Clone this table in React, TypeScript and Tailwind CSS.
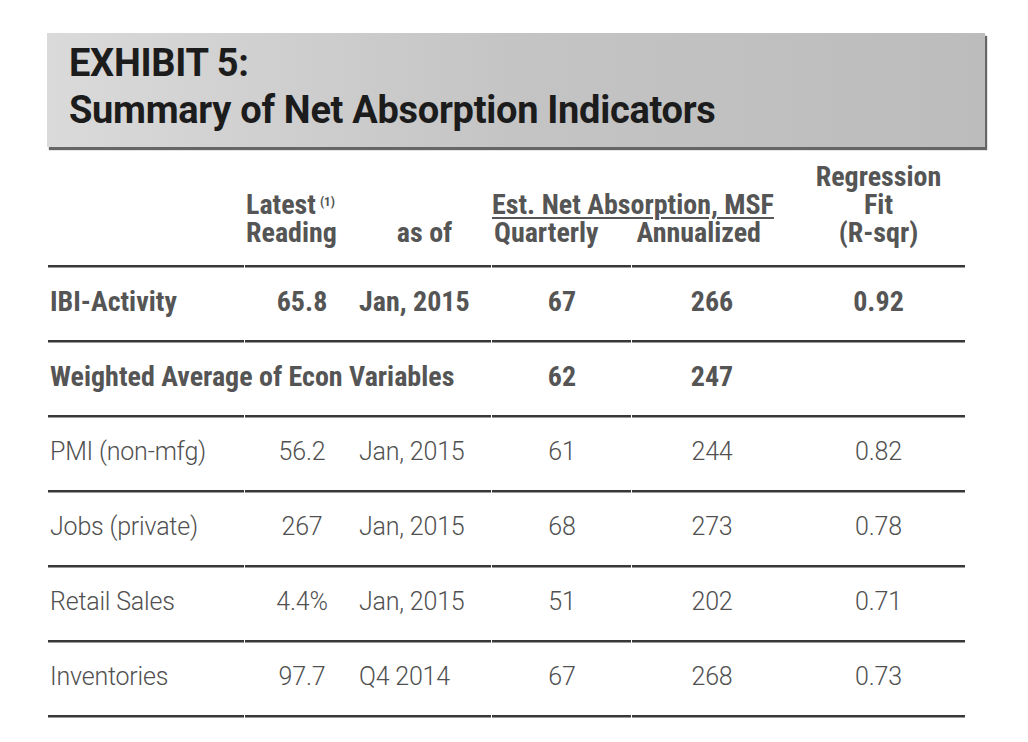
type Row = {
  label: string;
  latest?: string;
  asof?: string;
  q: string;
  a: string;
  r?: string;
  bold?: boolean;
  span?: boolean;
};

const rows: Row[] = [
  { label: "IBI-Activity", latest: "65.8", asof: "Jan, 2015", q: "67", a: "266", r: "0.92", bold: true },
  { label: "Weighted Average of Econ Variables", q: "62", a: "247", bold: true, span: true },
  { label: "PMI (non-mfg)", latest: "56.2", asof: "Jan, 2015", q: "61", a: "244", r: "0.82" },
  { label: "Jobs (private)", latest: "267", asof: "Jan, 2015", q: "68", a: "273", r: "0.78" },
  { label: "Retail Sales", latest: "4.4%", asof: "Jan, 2015", q: "51", a: "202", r: "0.71" },
  { label: "Inventories", latest: "97.7", asof: "Q4 2014", q: "67", a: "268", r: "0.73" },
];

function Rule() {
  return (
    <div className="flex gap-px h-[3px]">
      <div className="w-[196px] border-t-2 border-[#383838] bg-[#9a9a9a]" />
      <div className="w-[246px] border-t-2 border-[#383838] bg-[#9a9a9a]" />
      <div className="w-[139px] border-t-2 border-[#383838] bg-[#9a9a9a]" />
      <div className="flex-1 border-t-2 border-[#383838] bg-[#9a9a9a]" />
    </div>
  );
}

export default function App() {
  return (
    <div className="w-[1028px] h-[742px] bg-white pt-[33px] font-['Roboto',sans-serif] text-[#525252]">
      <div className="ml-[47px] w-[938px] h-[114px] bg-linear-to-r from-[#dadada] via-[#c4c4c5] to-[#bcbcbd] shadow-[2px_3px_1px_rgba(0,0,0,0.6)] pl-[22px] pt-[7px] text-[38px] leading-[47px] font-bold tracking-[-0.3px] text-[#1c1c1c]">
        <div>EXHIBIT 5:</div>
        <div>Summary of Net Absorption Indicators</div>
      </div>

      <div className="ml-[48px] w-[917px]">
        <div className="h-[118px] pb-[18px] grid grid-cols-[197px_114px_133px_300px_173px] items-end text-[28px] leading-[28px] font-bold font-stretch-[87.5%] text-[#555]">
          <div />
          <div className="pl-[1px]">
            <div className="flex items-start">
              <span>Latest</span>
              <span className="text-[13px] leading-[13px] ml-[4px] mt-[4px]">(1)</span>
            </div>
            <div>Reading</div>
          </div>
          <div className="text-center pr-[2px]">as of</div>
          <div>
            <div className="w-fit underline decoration-2 underline-offset-[3px]">Est. Net Absorption, MSF</div>
            <div className="w-[275px] flex justify-between pl-[2px] pr-[6px]">
              <span>Quarterly</span>
              <span>Annualized</span>
            </div>
          </div>
          <div className="text-center">
            <div>Regression</div>
            <div>Fit</div>
            <div>(R-sqr)</div>
          </div>
        </div>
        <Rule />
        {rows.map((row) => (
          <div key={row.label}>
            <div
              className={
                row.bold
                  ? "h-[72px] pb-[5px] grid grid-cols-[197px_114px_133px_140px_160px_173px] items-center text-[28px] leading-[32px] font-bold font-stretch-[87.5%] text-[#555]"
                  : "h-[72px] pb-[5px] grid grid-cols-[197px_114px_133px_140px_160px_173px] items-center text-[25px] font-light tracking-[-0.2px] text-[#505050]"
              }
            >
              {row.span ? (
                <div className="col-span-3 pl-[2px] whitespace-nowrap">{row.label}</div>
              ) : (
                <>
                  <div className="pl-[2px] whitespace-nowrap">{row.label}</div>
                  <div className="text-center">{row.latest}</div>
                  <div className="whitespace-nowrap">{row.asof}</div>
                </>
              )}
              <div className="text-center">{row.q}</div>
              <div className="text-center">{row.a}</div>
              <div className="text-center">{row.r}</div>
            </div>
            <Rule />
          </div>
        ))}
      </div>
    </div>
  );
}
